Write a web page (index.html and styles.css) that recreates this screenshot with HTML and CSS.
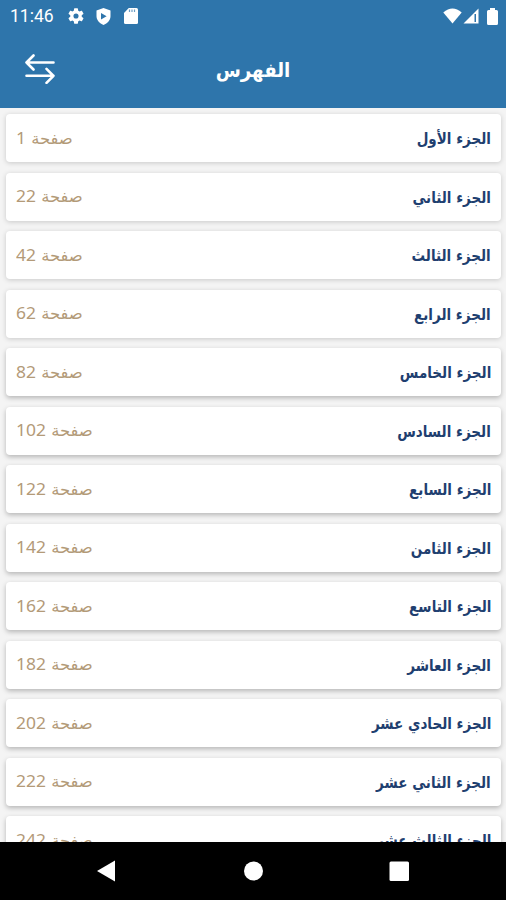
FILE: index.html
```html
<!DOCTYPE html>
<html lang="ar">
<head>
  <meta charset="UTF-8">
  <title>الفهرس</title>
  <link rel="stylesheet" href="styles.css">
</head>
<body>
  <header class="header">
    <div class="status-bar">
      <span class="time">11:46</span>
      <svg class="icon-settings" width="16" height="16" viewBox="2 2 20 20" fill="#fff"><path d="M19.14 12.94c.04-.3.06-.61.06-.94 0-.32-.02-.64-.07-.94l2.03-1.58a.5.5 0 0 0 .12-.61l-1.92-3.32a.5.5 0 0 0-.59-.22l-2.39.96a7 7 0 0 0-1.62-.94l-.36-2.54a.5.5 0 0 0-.48-.41h-3.84a.5.5 0 0 0-.47.41l-.36 2.54c-.59.24-1.13.57-1.62.94l-2.39-.96a.5.5 0 0 0-.59.22L2.74 8.87a.5.5 0 0 0 .12.61l2.03 1.58a6 6 0 0 0-.02 1.88l-2.03 1.58a.5.5 0 0 0-.12.61l1.92 3.32c.12.22.37.29.59.22l2.39-.96c.5.38 1.03.7 1.62.94l.36 2.54c.05.24.24.41.48.41h3.84c.24 0 .44-.17.47-.41l.36-2.54a7 7 0 0 0 1.62-.94l2.39.96c.22.08.47 0 .59-.22l1.92-3.32a.5.5 0 0 0-.12-.61zM12 15.2a3.2 3.2 0 1 1 0-6.4 3.2 3.2 0 0 1 0 6.4z"/></svg>
      <svg class="icon-shield" width="15" height="17" viewBox="0 0 15 17"><path fill="#fff" d="M7.500 0 14.500 2.600V8c0 4.200-3 7.400-7 9-4-1.600-7-4.800-7-9V2.600z"/><path fill="#2e75ab" d="M5 5v6.400l5.600-3.200z"/></svg>
      <svg class="icon-sd" width="14" height="16" viewBox="0 0 14 16"><path fill="#fff" d="M4.800 0H12.500Q14 0 14 1.500v13q0 1.500-1.500 1.500h-11Q0 16 0 14.500V5z"/><path stroke="#2e75ab" stroke-opacity=".7" stroke-width="1.200" d="M5.500 1.500v2.400M8 1.500v2.400M10.500 1.500v2.400"/></svg>
      <div class="signals">
        <svg width="19" height="16" viewBox="0 0 19 16"><path fill="#fff" d="M.3 4.500Q9.500-3.500 18.700 4.500L9.500 15.500z"/></svg>
        <svg class="icon-cell" width="16" height="16" viewBox="0 0 16 16"><path fill="#fff" d="M15.500.5v15H.5z"/><path fill="#2e75ab" d="M11.500 6h1.500v8h-1.500z"/></svg>
        <svg class="icon-battery" width="11" height="17" viewBox="0 0 11 17"><path fill="#fff" d="M3 0h5v2h1.500Q11 2 11 3.500v12q0 1.500-1.500 1.500h-8Q0 17 0 15.500v-12Q0 2 1.500 2H3z"/></svg>
      </div>
    </div>
    <div class="toolbar">
      <svg class="icon-swap" width="32" height="30" viewBox="0 0 32 30" fill="none" stroke="#fff" stroke-width="2.600" stroke-linecap="round" stroke-linejoin="round"><path d="M29.500 8.500H2.500M9.500 1.500l-7 7 7 7M2.500 21.800h27M22.500 14.800l7 7-7 7"/></svg>
      <h1>الفهرس</h1>
    </div>
  </header>

  <main class="list" dir="rtl">
    <div class="item"><span class="name">الجزء الأول</span><span class="page">صفحة <b>1</b></span></div>
    <div class="item"><span class="name">الجزء الثاني</span><span class="page">صفحة <b>22</b></span></div>
    <div class="item"><span class="name">الجزء الثالث</span><span class="page">صفحة <b>42</b></span></div>
    <div class="item"><span class="name">الجزء الرابع</span><span class="page">صفحة <b>62</b></span></div>
    <div class="item"><span class="name">الجزء الخامس</span><span class="page">صفحة <b>82</b></span></div>
    <div class="item"><span class="name">الجزء السادس</span><span class="page">صفحة <b>102</b></span></div>
    <div class="item"><span class="name">الجزء السابع</span><span class="page">صفحة <b>122</b></span></div>
    <div class="item"><span class="name">الجزء الثامن</span><span class="page">صفحة <b>142</b></span></div>
    <div class="item"><span class="name">الجزء التاسع</span><span class="page">صفحة <b>162</b></span></div>
    <div class="item"><span class="name">الجزء العاشر</span><span class="page">صفحة <b>182</b></span></div>
    <div class="item"><span class="name">الجزء الحادي عشر</span><span class="page">صفحة <b>202</b></span></div>
    <div class="item"><span class="name">الجزء الثاني عشر</span><span class="page">صفحة <b>222</b></span></div>
    <div class="item"><span class="name">الجزء الثالث عشر</span><span class="page">صفحة <b>242</b></span></div>
  </main>

  <nav class="nav-bar">
    <svg width="506" height="58" viewBox="0 0 506 58" fill="#fff"><path d="M97 29 115 18.500v21z"/><circle cx="253.500" cy="29" r="9.500"/><rect x="389.500" y="19.500" width="19.500" height="19.500" rx="1.500"/></svg>
  </nav>
</body>
</html>
```
FILE: styles.css
```css
* {
  box-sizing: border-box;
}

body {
  margin: 0;
  height: 900px;
  display: flex;
  flex-direction: column;
  overflow: hidden;
  background-color: #f4f4f4;
  font-family: "DejaVu Sans", sans-serif;
}

.header {
  height: 108px;
  flex: none;
  background-color: #2e75ab;
  color: #fff;
}

.status-bar {
  display: flex;
  align-items: center;
  height: 32px;
  padding: 0 8px 0 10px;
}

.time {
  width: 58px;
  font: 17.5px Roboto, sans-serif;
}

.icon-shield {
  margin-left: 12px;
}

.icon-sd {
  margin-left: 13px;
}

.signals {
  display: flex;
  align-items: center;
  margin-left: auto;
}

.icon-cell {
  margin-left: 1px;
}

.icon-battery {
  margin-left: 8px;
}

.toolbar {
  display: grid;
  grid-template-columns: 32px 1fr 32px;
  align-items: center;
  height: 76px;
  padding: 0 24px 2px;
}

h1 {
  margin: 2px 0 0;
  font-size: 20px;
  text-align: center;
  transform: scaleX(0.91);
}

.list {
  flex: 1;
  min-height: 0;
  overflow: hidden;
  display: flex;
  flex-direction: column;
  gap: 10.5px;
  padding: 6px 5px 0 6px;
}

.item {
  display: flex;
  flex: none;
  justify-content: space-between;
  align-items: center;
  height: 48px;
  padding: 0 10px;
  border-radius: 4px;
  background-color: #fff;
  box-shadow: 0 1px 5px rgba(0, 0, 0, 0.18);
}

.item:nth-child(n+5) {
  box-shadow: 0 2px 5px rgba(0, 0, 0, 0.26);
}

.name {
  padding-top: 1px;
  color: #1f3f70;
  font-size: 16px;
  font-weight: bold;
  transform: scaleX(0.845);
  transform-origin: right;
}

.page {
  padding-bottom: 2px;
  color: #b39a78;
  font-size: 16px;
  transform: scaleX(1.025);
  transform-origin: left;
}

.page b {
  font: 17px "Noto Sans", sans-serif;
}

.nav-bar {
  flex: none;
  height: 58px;
  background-color: #000;
}

.nav-bar svg {
  display: block;
}
```
